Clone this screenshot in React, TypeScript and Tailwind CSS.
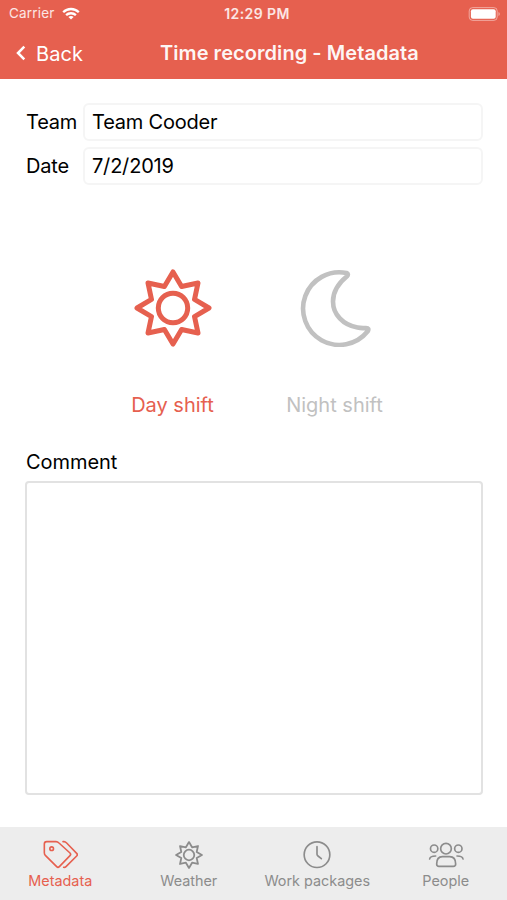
import type { ReactNode } from 'react'

type IconProps = {
  className?: string
}

function SunIcon({ className }: IconProps) {
  return (
    <svg
      viewBox="-39 -39 78 78"
      className={className}
      fill="none"
      stroke="currentColor"
      strokeWidth="5"
      strokeLinejoin="round"
    >
      <path d="M0-36 8.6-21.5 25-25 21.5-8.6 36 0 21.5 8.6 25 25 8.6 21.5 0 36-8.6 21.5-25 25-21.5 8.6-36 0-21.5-8.6-25-25-8.6-21.5Z" />
      <circle r="14.7" />
    </svg>
  )
}

function MoonIcon({ className }: IconProps) {
  return (
    <svg
      viewBox="10 9 78 78"
      className={className}
      fill="none"
      stroke="currentColor"
      strokeWidth="4.6"
      strokeLinejoin="round"
    >
      <path d="M60.5 13A36.3 36.3 0 1 0 81.7 71.3Q83.6 68 80 68C76 68.3 74 68.1 71.5 67.6C57 65 47 54.5 47 41.5C47 32 51.5 24 61 16.3Q63 14 60.5 13Z" />
    </svg>
  )
}

function TagsIcon() {
  return (
    <svg
      viewBox="127 180 108 90"
      className="h-[30px] w-9"
      fill="none"
      stroke="currentColor"
      strokeWidth="4.8"
      strokeLinecap="round"
      strokeLinejoin="round"
    >
      <path d="M141 185H169Q174 185 178 189L211 219Q215 223 211 227L179 260Q175 264 171 260L137 226Q134 223 134 218V192Q134 185 141 185Z" />
      <path d="M190 185H193Q197 185 201 189L231 220Q235 224 231 228L199 260Q196 263 192 262" />
      <circle cx="156" cy="206" r="5.5" />
    </svg>
  )
}

function ClockIcon() {
  return (
    <svg
      viewBox="149 180 90 90"
      className="size-[30px]"
      fill="none"
      stroke="currentColor"
      strokeWidth="5"
      strokeLinecap="round"
      strokeLinejoin="round"
    >
      <circle cx="194" cy="224" r="38.5" />
      <path d="M194 200V223Q194 226 197 228L207 236" />
    </svg>
  )
}

function PeopleIcon() {
  return (
    <svg
      viewBox="525 180 108 90"
      className="h-[30px] w-9"
      fill="none"
      stroke="currentColor"
      strokeWidth="5"
      strokeLinecap="round"
      strokeLinejoin="round"
    >
      <circle cx="579" cy="206" r="16" />
      <circle cx="543.5" cy="206" r="11" />
      <circle cx="616" cy="206" r="11" />
      <path d="M568 230H590C602 230 608 239 608 252Q608 259 601 259H558Q551 259 551 252C551 239 557 230 568 230Z" />
      <path d="M530 237C531 230 536 228 548 228" />
      <path d="M630 237C629 230 624 228 612 228" />
    </svg>
  )
}

function StatusBar() {
  return (
    <div className="relative flex h-[27px] items-center justify-between pl-[9px] pr-1.5 text-[13.5px] text-white/85">
      <div className="flex items-center gap-[7px]">
        <span className="tracking-[0.2px]">Carrier</span>
        <svg viewBox="0 0 18 13" className="h-[13px] w-[18px]" fill="none" stroke="white" strokeWidth="2.3">
          <path d="M1.2 5.2C5.5.9 12.5.9 16.8 5.2" />
          <path d="M4.1 8.2C6.8 5.6 11.2 5.6 13.9 8.2" />
          <path d="M9 12.6 6.4 10C7.8 8.6 10.2 8.6 11.6 10Z" fill="white" stroke="none" />
        </svg>
      </div>
      <span className="absolute inset-x-0 top-[3px] pl-[7px] text-center text-[14px] font-semibold tracking-[0.4px]">
        12:29 PM
      </span>
      <svg viewBox="0 0 33 14" className="h-3.5 w-[33px]" fill="none">
        <rect x="1.2" y=".6" width="28" height="12.8" rx="3.4" stroke="white" strokeOpacity=".45" />
        <rect x="2.9" y="2.3" width="24.8" height="9.4" rx="2" fill="white" />
        <path d="M30.5 5V9C32.2 8.4 32.2 5.6 30.5 5Z" fill="white" fillOpacity=".5" />
      </svg>
    </div>
  )
}

function Header() {
  return (
    <header className="h-[79px] shrink-0 bg-[#e6604f] text-white">
      <StatusBar />
      <div className="flex h-[52px] items-center">
        <button className="flex w-40 items-center pl-4 text-[20px]">
          <svg viewBox="0 0 10 16" className="mr-[10px] h-4 w-2.5" fill="none" stroke="currentColor" strokeWidth="2.5">
            <path d="M8.3 1.6 2 8 8.3 14.4" />
          </svg>
          <span className="relative top-px tracking-[0.1px]">Back</span>
        </button>
        <h1 className="whitespace-nowrap text-[20px] font-semibold tracking-[0.06px] text-white/95">
          Time recording - Metadata
        </h1>
      </div>
    </header>
  )
}

type FieldProps = {
  label: string
  value: string
}

function Field({ label, value }: FieldProps) {
  return (
    <div className="flex h-[38px] items-center tracking-[-0.2px]">
      <span className="w-[58px] pl-px">{label}</span>
      <div className="flex h-full flex-1 items-center rounded-md border-2 border-[#f5f5f5] pl-[7px]">{value}</div>
    </div>
  )
}

type TabProps = {
  label: string
  icon: ReactNode
  active?: boolean
}

function Tab({ label, icon, active }: TabProps) {
  return (
    <div className={`flex flex-col items-center pt-[13px] ${active ? 'text-[#e6604f]' : 'text-[#8c8c8c]'}`}>
      <div className="flex h-[30px] items-center">{icon}</div>
      <span className="mt-px text-[14.4px] leading-5">{label}</span>
    </div>
  )
}

export default function App() {
  return (
    <div className="flex h-[900px] w-[507px] flex-col overflow-hidden bg-white font-['Inter',sans-serif] text-black">
      <Header />
      <main className="flex flex-1 flex-col pl-[25px] pr-6 pt-6 text-[20px]">
        <div className="flex flex-col gap-1.5">
          <Field label="Team" value="Team Cooder" />
          <Field label="Date" value="7/2/2019" />
        </div>
        <div className="mt-[84px] flex gap-[52px] pl-[96.5px]">
          <div className="flex w-[102px] flex-col items-center text-[#e6604f]">
            <SunIcon className="size-[78px]" />
            <span className="mt-11 leading-7">Day shift</span>
          </div>
          <div className="flex w-[118px] flex-col items-center whitespace-nowrap text-[#c1c1c1]">
            <MoonIcon className="size-[78px]" />
            <span className="mt-11 leading-7">Night shift</span>
          </div>
        </div>
        <span className="mt-[29px] pl-px leading-7 tracking-[-0.05px]">Comment</span>
        <div className="mt-[5px] h-[314px] rounded-[4px] border-2 border-[#e2e2e2]" />
      </main>
      <nav className="-ml-1 -mr-[3px] grid h-[73px] shrink-0 grid-cols-4 bg-[#ededed]">
        <Tab label="Metadata" icon={<TagsIcon />} active />
        <Tab label="Weather" icon={<SunIcon className="size-7" />} />
        <Tab label="Work packages" icon={<ClockIcon />} />
        <Tab label="People" icon={<PeopleIcon />} />
      </nav>
    </div>
  )
}
